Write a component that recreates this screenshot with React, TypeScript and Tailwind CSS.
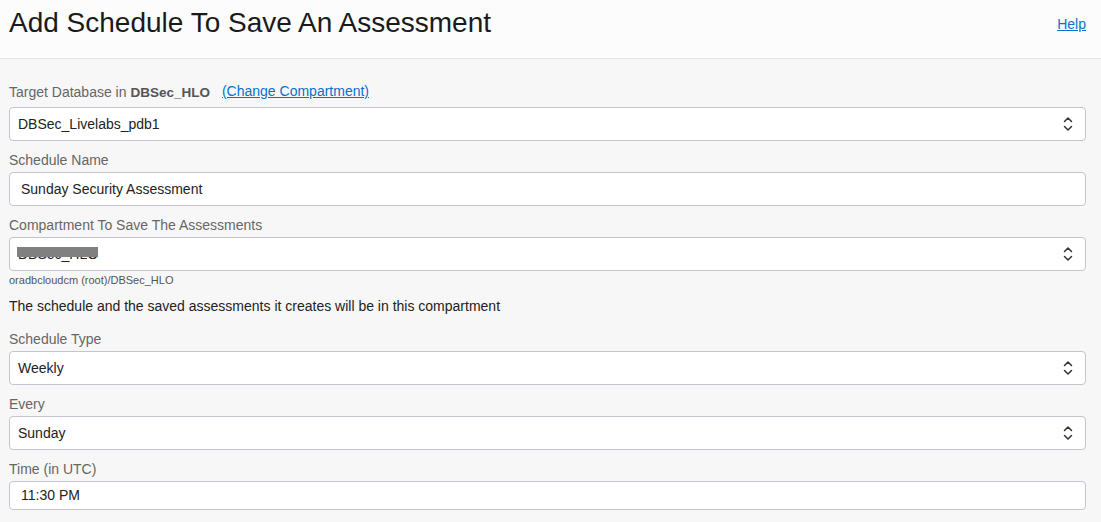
import React from "react";

const Chevrons = () => (
  <svg width="10" height="16" viewBox="0 0 10 16" className="absolute right-[12px] top-1/2 -translate-y-1/2" fill="none" stroke="#333" strokeWidth="1.5" strokeLinecap="round" strokeLinejoin="round">
    <path d="M1.5 5.5 L5 2 L8.5 5.5" />
    <path d="M1.5 10.5 L5 14 L8.5 10.5" />
  </svg>
);

const Label = ({ children }: { children: React.ReactNode }) => (
  <div className="text-[14px] leading-[20px] text-[#666] mb-[2px]">{children}</div>
);

const Select = ({ value, redact }: { value: string; redact?: boolean }) => (
  <div className="relative h-[34px] bg-white border border-[#c4c5cc] rounded-[4px] flex items-center pl-[8px] text-[14px] text-[#222]">
    <span className="relative">
      {value}
      {redact && <span className="absolute left-[-1px] top-[3px] w-[81px] h-[10px] bg-[#808080]" />}
    </span>
    <Chevrons />
  </div>
);

const Input = ({ value, h = 34 }: { value: string; h?: number }) => (
  <div
    className={`bg-white border border-[#c4c5cc] rounded-[4px] flex items-center pl-[11px] text-[14px] text-[#222] ${h === 34 ? "h-[34px]" : "h-[29px]"}`}
  >
    {value}
  </div>
);

export default function App() {
  return (
    <div className="w-[1101px] h-[522px] overflow-hidden bg-[#f7f7f7]" style={{ fontFamily: '"Liberation Sans", Arial, sans-serif' }}>
      <div className="h-[59px] bg-[#fcfcfc] border-b border-[#e4e4e4] flex items-start justify-between pl-[9px] pr-[15px]">
        <h1 className="text-[28px] leading-[32px] mt-[7px] text-[#1a1a1a]">Add Schedule To Save An Assessment</h1>
        <a className="text-[14px] text-[#0572ce] underline mt-[14px]" href="#">Help</a>
      </div>
      <div className="pl-[9px] pr-[15px] pt-[23px]">
        <div className="flex items-end text-[14px] leading-[20px] mb-[4px]">
          <span className="text-[#666]">Target Database in <b className="text-[#555] text-[13.5px]">DBSec_HLO</b></span>
          <a className="ml-[12px] text-[#0572ce] underline relative top-[-2px]" href="#">(Change Compartment)</a>
        </div>
        <Select value="DBSec_Livelabs_pdb1" />
        <div className="mt-[9px]">
          <Label>Schedule Name</Label>
          <Input value="Sunday Security Assessment" />
        </div>
        <div className="mt-[9px]">
          <Label>Compartment To Save The Assessments</Label>
          <Select value="DBSec_HLO" redact />
        </div>
        <div className="text-[11px] leading-[14px] text-[#555] mt-[2px]">oradbcloudcm (root)/DBSec_HLO</div>
        <div className="text-[14px] leading-[20px] text-[#222] mt-[9px]">The schedule and the saved assessments it creates will be in this compartment</div>
        <div className="mt-[13px]">
          <Label>Schedule Type</Label>
          <Select value="Weekly" />
        </div>
        <div className="mt-[9px]">
          <Label>Every</Label>
          <Select value="Sunday" />
        </div>
        <div className="mt-[9px]">
          <Label>Time (in UTC)</Label>
          <Input value="11:30 PM" h={29} />
        </div>
      </div>
    </div>
  );
}
